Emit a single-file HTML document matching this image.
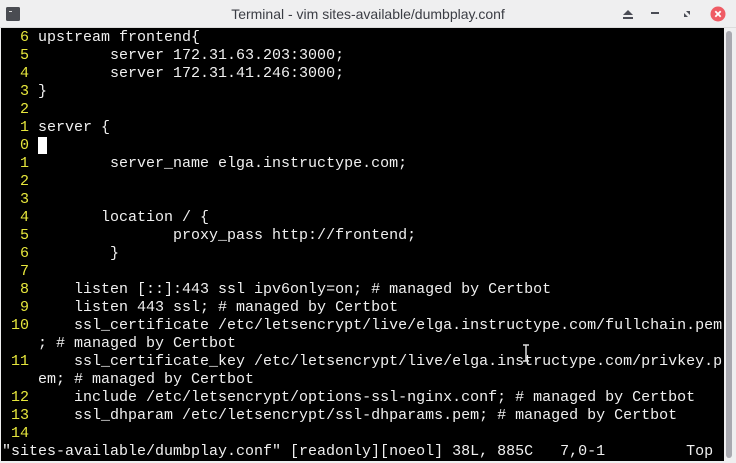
<!DOCTYPE html>
<html><head><style>
body{margin:0;width:736px;height:463px;overflow:hidden;background:#efeff0;font-family:"Liberation Sans",sans-serif;position:relative}
#title{position:absolute;left:0;top:0;width:736px;height:28px;background:#efeff0;border-bottom:1px solid #dcdcdc;box-sizing:border-box}
#title .t{position:absolute;left:0;right:0;top:6px;text-align:center;font-size:14px;color:#3b3d44}
#term{position:absolute;left:1px;top:28px;width:723px;height:433px;background:#000;overflow:hidden}
pre{margin:0;position:absolute;left:1px;top:1px;font-family:"Liberation Mono",monospace;font-size:15px;line-height:18px;color:#f0f0f0;letter-spacing:0px;transform:scaleX(1);white-space:pre}
.n{color:#e6e63c}
.cur{background:#fff;color:#000}
#sb{position:absolute;left:726px;top:31px;width:6px;height:427px;background:#a9a9b0;border-radius:3px}
</style></head><body>
<div id="title">
 <svg style="position:absolute;left:6px;top:7px" width="14" height="14"><rect x="0" y="0" width="14" height="14" rx="1.5" fill="#4a4c52"/><rect x="3" y="4" width="3" height="1" fill="#ddd"/></svg>
 <div class="t">Terminal - vim sites-available/dumbplay.conf</div>
 <svg style="position:absolute;left:622px;top:9px" width="12" height="10"><polygon points="6,1 11,6 1,6" fill="#4a4c55"/><rect x="1" y="8" width="10" height="2" fill="#4a4c55"/></svg>
 <svg style="position:absolute;left:651px;top:12px" width="10" height="4"><rect width="8" height="2" fill="#4a4c55"/></svg>
 <svg style="position:absolute;left:682px;top:9px" width="10" height="10"><polygon points="2,8 2,4 6,8" fill="#4a4c55"/><polygon points="8,2 8,6 4,2" fill="#4a4c55"/></svg>
 <svg style="position:absolute;left:710px;top:6px" width="16" height="16"><circle cx="8" cy="8" r="7.5" fill="#ef5b64"/><path d="M5.3 5.3L10.7 10.7M10.7 5.3L5.3 10.7" stroke="#fff" stroke-width="1.8"/></svg>
</div>
<div id="term"><pre><span class="n">  6 </span>upstream frontend{
<span class="n">  5 </span>        server 172.31.63.203:3000;
<span class="n">  4 </span>        server 172.31.41.246:3000;
<span class="n">  3 </span>}
<span class="n">  2 </span>
<span class="n">  1 </span>server {
<span class="n">  0 </span><span class="cur"> </span>
<span class="n">  1 </span>        server_name elga.instructype.com;
<span class="n">  2 </span>
<span class="n">  3 </span>
<span class="n">  4 </span>       location / {
<span class="n">  5 </span>               proxy_pass http://frontend;
<span class="n">  6 </span>        }
<span class="n">  7 </span>
<span class="n">  8 </span>    listen [::]:443 ssl ipv6only=on; # managed by Certbot
<span class="n">  9 </span>    listen 443 ssl; # managed by Certbot
<span class="n"> 10 </span>    ssl_certificate /etc/letsencrypt/live/elga.instructype.com/fullchain.pem
    ; # managed by Certbot
<span class="n"> 11 </span>    ssl_certificate_key /etc/letsencrypt/live/elga.instructype.com/privkey.p
    em; # managed by Certbot
<span class="n"> 12 </span>    include /etc/letsencrypt/options-ssl-nginx.conf; # managed by Certbot
<span class="n"> 13 </span>    ssl_dhparam /etc/letsencrypt/ssl-dhparams.pem; # managed by Certbot
<span class="n"> 14 </span>
"sites-available/dumbplay.conf" [readonly][noeol] 38L, 885C   7,0-1         Top</pre>
<svg style="position:absolute;left:520px;top:316px" width="10" height="18"><path d="M2 1H8M5 1V17M2 17H8" stroke="#ddd" stroke-width="1.5" fill="none"/></svg>
</div>
<div id="sb"></div>
</body></html>
